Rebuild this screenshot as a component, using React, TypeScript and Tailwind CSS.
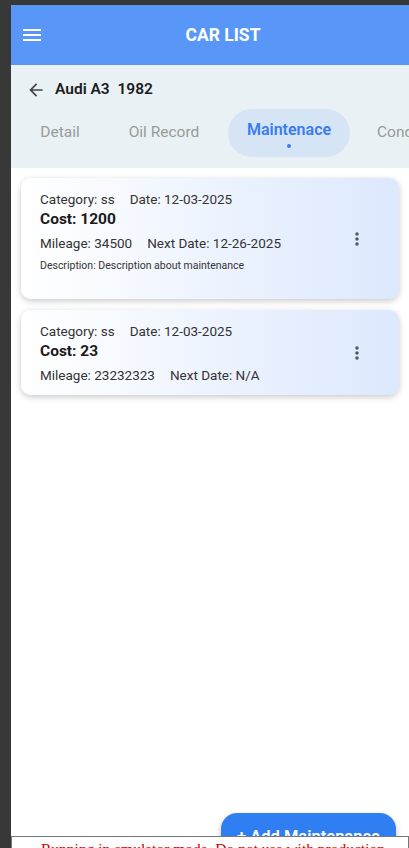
import React from "react";

const font = { fontFamily: "Roboto, 'Noto Sans', sans-serif" };

function Kebab() {
  return (
    <svg width="20" height="20" viewBox="0 0 24 24" fill="#555">
      <path d="M12 8c1.1 0 2-.9 2-2s-.9-2-2-2-2 .9-2 2 .9 2 2 2zm0 2c-1.1 0-2 .9-2 2s.9 2 2 2 2-.9 2-2-.9-2-2-2zm0 6c-1.1 0-2 .9-2 2s.9 2 2 2 2-.9 2-2-.9-2-2-2z" />
    </svg>
  );
}

type Rec = {
  cost: string;
  mileage: string;
  next: string;
  desc?: string;
};

function Card({ r }: { r: Rec }) {
  return (
    <div className="mx-[10px] rounded-[10px] bg-gradient-to-r from-white to-[#dce8fd] shadow-[0_2px_6px_rgba(0,0,0,0.22)] flex items-center pl-[19px]">
      <div
        className={`flex-1 flex flex-col text-[#333] pt-[13px] ${
          r.desc ? "pb-[26px]" : "pb-[12px]"
        }`}
      >
        <div className="h-[16px] leading-[16px] text-[13.5px] flex gap-[15px]">
          <span>Category: ss</span>
          <span>Date: 12-03-2025</span>
        </div>
        <div className="mt-[2px] h-[20px] leading-[20px] text-[15.5px] font-bold text-[#1a1a1a]">
          Cost: {r.cost}
        </div>
        <div className="mt-[6px] h-[16px] leading-[16px] text-[13.5px] flex gap-[15px]">
          <span>Mileage: {r.mileage}</span>
          <span>Next Date: {r.next}</span>
        </div>
        {r.desc && (
          <div className="mt-[8px] h-[14px] leading-[14px] text-[10.5px] text-[#333]">
            Description: {r.desc}
          </div>
        )}
      </div>
      <div className="w-[48px] mr-[18px] flex items-center justify-center">
        <Kebab />
      </div>
    </div>
  );
}

export default function App() {
  const recs: Rec[] = [
    { cost: "1200", mileage: "34500", next: "12-26-2025", desc: "Description about maintenance" },
    { cost: "23", mileage: "23232323", next: "N/A" },
  ];
  return (
    <div
      className="w-[409px] h-[848px] bg-[#383838] pt-[5px] pl-[11px] overflow-hidden relative flex flex-col"
      style={font}
    >
      <div className="flex-1 bg-white flex flex-col">
        {/* App bar */}
        <div className="h-[60px] bg-[#5897f7] flex items-center">
          <div className="ml-[12px] w-[18px] h-[12px] flex flex-col justify-between">
            <div className="h-[2px] bg-white" />
            <div className="h-[2px] bg-white" />
            <div className="h-[2px] bg-white" />
          </div>
          <div className="flex-1 text-center text-white font-bold text-[17.5px] pr-[4px]">
            CAR LIST
          </div>
        </div>
        {/* Sub header */}
        <div className="h-[103px] bg-[#e9f1f5] flex flex-col">
          <div className="mt-[16px] h-[18px] flex items-center">
            <svg className="ml-[15px]" width="20" height="20" viewBox="0 0 24 24" fill="#444">
              <path d="M20 11H7.83l5.59-5.59L12 4l-8 8 8 8 1.41-1.41L7.83 13H20v-2z" />
            </svg>
            <span className="ml-[9px] text-[15.5px] font-semibold text-[#1a1c22] whitespace-pre">
              Audi A3  1982
            </span>
          </div>
          <div className="mt-[10px] flex items-center gap-[8px] ml-[9px] whitespace-nowrap overflow-hidden">
            <div className="h-[48px] w-[80px] shrink-0 flex items-center justify-center text-[15.5px] text-[#9a9a9a]">Detail</div>
            <div className="h-[48px] w-[112px] shrink-0 flex items-center justify-center text-[15.5px] text-[#9a9a9a]">Oil Record</div>
            <div className="h-[48px] w-[122px] shrink-0 rounded-full bg-[#d6e5f6] flex flex-col items-center justify-center">
              <span className="text-[16px] font-semibold text-[#3a7cf0] leading-[18px] mt-[2px]">Maintenace</span>
              <span className="mt-[5px] w-[4px] h-[4px] rounded-full bg-[#3a7cf0]" />
            </div>
            <div className="h-[48px] shrink-0 pl-[19px] flex items-center text-[15.5px] text-[#9a9a9a]">Condition</div>
          </div>
        </div>
        {/* List */}
        <div className="pt-[10px] flex flex-col gap-[11px]">
          {recs.map((r, i) => (
            <Card key={i} r={r} />
          ))}
        </div>
      </div>

      {/* FAB */}
      <div className="absolute left-[221px] top-[813px] w-[175px] h-[48px] rounded-[16px] bg-[#2f7ff2] shadow-[0_3px_6px_rgba(0,0,0,0.25)] flex items-center justify-center text-white font-semibold text-[16.5px]">
        + Add Maintenance
      </div>

      {/* Emulator warning */}
      <div
        className="absolute left-[11px] right-0 top-[836px] h-[40px] bg-white border border-[#777] text-center text-[15.5px] text-[#d00000] pt-[3px] leading-[18px] pl-[10px] pr-[4px]"
        style={{ fontFamily: "'Liberation Serif', serif" }}
      >
        Running in emulator mode. Do not use with production credentials.
      </div>
    </div>
  );
}
